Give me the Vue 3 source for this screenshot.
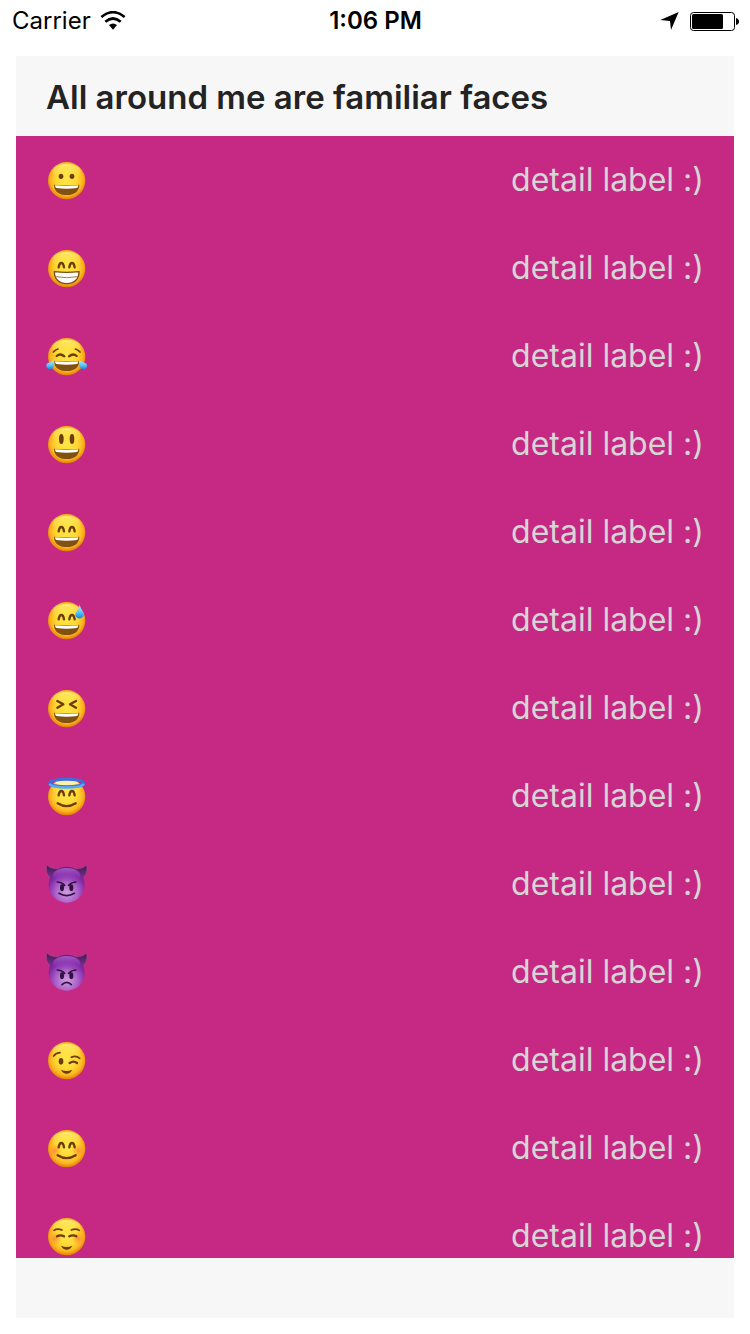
<script setup>
const faces = [
  { name: 'Grinning face', type: 'grin', eyes: 'dots', mouth: 'open' },
  { name: 'Beaming face', type: 'beam', eyes: 'arcs', mouth: 'teeth' },
  { name: 'Tears of joy', type: 'joy', eyes: 'joy', mouth: 'open' },
  { name: 'Big eyes', type: 'big', eyes: 'tall', mouth: 'open' },
  { name: 'Smiling eyes', type: 'smile', eyes: 'arcs', mouth: 'open' },
  { name: 'Sweat', type: 'sweat', eyes: 'arcs', mouth: 'open' },
  { name: 'Squinting', type: 'squint', eyes: 'squint', mouth: 'open' },
  { name: 'Halo', type: 'halo', eyes: 'arcs', mouth: 'smile' },
  { name: 'Smiling imp', type: 'imp', eyes: 'imp', mouth: 'smirk' },
  { name: 'Angry imp', type: 'angry', eyes: 'imp', mouth: 'frown' },
  { name: 'Winking', type: 'wink', eyes: 'wink', mouth: 'small' },
  { name: 'Blushing', type: 'blush', eyes: 'arcs', mouth: 'smile' },
  { name: 'Relaxed', type: 'relaxed', eyes: 'relaxed', mouth: 'small' },
]
const isImp = (f) => f.eyes === 'imp'
</script>

<template>
  <div class="screen">
    <svg class="defs" width="0" height="0" aria-hidden="true">
      <defs>
        <radialGradient id="yellow" cx="0.5" cy="0.46" r="0.56">
          <stop offset="0" stop-color="#ffe648" />
          <stop offset="0.5" stop-color="#ffd834" />
          <stop offset="0.78" stop-color="#fbb420" />
          <stop offset="1" stop-color="#dd7206" />
        </radialGradient>
        <linearGradient id="shine" x1="0" y1="0" x2="0" y2="1">
          <stop offset="0" stop-color="#fff27a" stop-opacity="0.85" />
          <stop offset="1" stop-color="#ffe040" stop-opacity="0" />
        </linearGradient>
        <radialGradient id="purple" cx="0.5" cy="0.72" r="0.7">
          <stop offset="0" stop-color="#cf9ce0" />
          <stop offset="0.45" stop-color="#aa60c8" />
          <stop offset="0.75" stop-color="#8429a8" />
          <stop offset="1" stop-color="#61257f" />
        </radialGradient>
        <linearGradient id="impShine" x1="0" y1="0" x2="0" y2="1">
          <stop offset="0" stop-color="#a35bc8" />
          <stop offset="1" stop-color="#8f2db4" stop-opacity="0" />
        </linearGradient>
        <linearGradient id="horn" x1="0" y1="0" x2="0" y2="1">
          <stop offset="0" stop-color="#3d1a52" />
          <stop offset="1" stop-color="#80308f" />
        </linearGradient>
        <linearGradient id="water" x1="0" y1="0" x2="0" y2="1">
          <stop offset="0" stop-color="#b8eafc" />
          <stop offset="0.55" stop-color="#5cc8f8" />
          <stop offset="1" stop-color="#1585dc" />
        </linearGradient>
        <radialGradient id="cheek">
          <stop offset="0" stop-color="#ff7838" stop-opacity="0.7" />
          <stop offset="1" stop-color="#ff8a30" stop-opacity="0" />
        </radialGradient>
      </defs>
    </svg>

    <header class="status">
      <div class="carrier">
        <span>Carrier</span>
        <svg width="26" height="20" viewBox="0 0 78 60" aria-hidden="true">
          <path d="M4 18Q39-11 74 18" fill="none" stroke="#000" stroke-width="8" />
          <path d="M16 32Q39 13 62 32" fill="none" stroke="#000" stroke-width="8" />
          <path d="M27 42Q39 33 51 42L39 56Z" />
        </svg>
      </div>
      <time class="time">1:06 PM</time>
      <div class="indicators">
        <svg width="20" height="20" viewBox="0 0 60 60" aria-hidden="true">
          <path d="M56 3L33 57L30 30L1 27Z" />
        </svg>
        <svg width="50" height="20" viewBox="0 0 50 20" aria-hidden="true">
          <rect x="1.5" y="1.5" width="44" height="18" rx="3" fill="none" stroke="#000" />
          <rect x="3" y="3" width="31" height="15" rx="1.5" />
          <path d="M47 7Q50 8 50 10.500Q50 13 47 14Z" />
        </svg>
      </div>
    </header>

    <main class="card">
      <h1 class="title">All around me are familiar faces</h1>
      <ul class="list">
        <li v-for="f in faces" :key="f.type" class="row">
          <svg class="face" viewBox="0 0 180 180" role="img" :aria-label="f.name">
            <template v-if="isImp(f)">
              <path d="M21 33C29 43 44 45 60 45L31 73C19 62 17 45 21 33Z" fill="url(#horn)" stroke="#a45391" stroke-width="1.500" />
              <path d="M139 33C131 43 116 45 100 45L129 73C141 62 143 45 139 33Z" fill="url(#horn)" stroke="#a45391" stroke-width="1.500" />
              <circle cx="80" cy="92" r="54" fill="url(#purple)" />
              <ellipse cx="80" cy="64" rx="41" ry="22" fill="url(#impShine)" />
            </template>
            <template v-else>
              <circle cx="80" cy="92" r="56" fill="url(#yellow)" />
              <ellipse cx="80" cy="66" rx="42" ry="25" fill="url(#shine)" />
            </template>

            <g v-if="f.type === 'blush' || f.type === 'relaxed'" fill="url(#cheek)">
              <circle cx="45" cy="98" r="20" />
              <circle cx="115" cy="98" r="20" />
            </g>

            <g v-if="f.eyes === 'dots'" fill="#6b3d0a">
              <ellipse cx="63" cy="79" rx="7" ry="8" />
              <ellipse cx="96" cy="79" rx="7" ry="8" />
            </g>
            <g v-else-if="f.eyes === 'tall'" fill="#6b3d0a">
              <ellipse cx="64" cy="75" rx="7" ry="15" />
              <ellipse cx="96" cy="75" rx="7" ry="15" />
            </g>
            <g v-else-if="f.eyes === 'arcs'" class="ink">
              <path d="M56 88Q58 75 64 75Q70 75 72 88" />
              <path d="M88 88Q90 75 96 75Q102 75 104 88" />
            </g>
            <g v-else-if="f.eyes === 'joy'" class="ink">
              <path d="M50 90Q61 80 73 91M87 91Q99 80 110 90" />
              <path d="M40 78Q46 71 54 69M106 69Q114 71 120 78" class="thin" />
            </g>
            <g v-else-if="f.eyes === 'squint'" class="ink">
              <path d="M52 69L70 79L52 89M108 69L90 79L108 89" />
            </g>
            <g v-else-if="f.eyes === 'wink'">
              <ellipse cx="63" cy="94" rx="7" ry="10" fill="#6b3d0a" />
              <g class="ink">
                <path d="M89 99Q101 91 111 99" />
                <path d="M41 78Q49 68 60 68M94 82Q108 75 119 85" class="thin" />
              </g>
            </g>
            <g v-else-if="f.eyes === 'relaxed'" class="ink">
              <path d="M51 91Q62 85 72 91M88 91Q99 85 109 91" />
              <path d="M42 73Q52 66 66 72M94 72Q107 66 118 73" class="thin" />
            </g>
            <g v-else>
              <ellipse cx="66" cy="101" rx="6" ry="10" fill="#30113f" />
              <ellipse cx="94" cy="101" rx="6" ry="10" fill="#30113f" />
              <path d="M52 84Q65 84 74 94M108 84Q95 84 86 94" class="impInk" />
            </g>

            <template v-if="f.mouth === 'open'">
              <path d="M42 104Q80 109 118 104C118 124 103 135 80 135C57 135 42 124 42 104Z" fill="#82500f" />
              <path d="M45 106Q80 110 115 106Q115 112 111 114Q80 119 49 114Q45 112 45 106Z" fill="#fff" />
            </template>
            <template v-else-if="f.mouth === 'teeth'">
              <path d="M43 101Q80 105 117 101C117 124 102 137 80 137C58 137 43 124 43 101Z" fill="#fff" stroke="#7a4b12" stroke-width="4" />
              <path d="M46 116Q80 122 114 116" fill="none" stroke="#9a7a4e" stroke-width="3" />
              <path d="M64 106V133M80 107V136M96 106V133" fill="none" stroke="#d9d0c2" stroke-width="1" />
            </template>
            <path v-else-if="f.mouth === 'smile'" d="M53 112Q80 129 107 112" class="ink" />
            <path v-else-if="f.mouth === 'small'" d="M63 119Q80 127 97 119Q91 131 80 131Q69 131 63 119Z" fill="#6b3d0a" />
            <path v-else-if="f.mouth === 'smirk'" d="M57 118Q80 132 103 118" class="impInk" />
            <path v-else d="M66 128Q80 114 94 128" class="impInk" />

            <template v-if="f.type === 'joy'">
              <path d="M43 102Q46 130 30 130Q19 129 19 118C20 109 34 109 43 102Z" fill="url(#water)" />
              <path d="M117 102Q114 130 130 130Q141 129 141 118C140 109 126 109 117 102Z" fill="url(#water)" />
            </template>
            <path v-if="f.type === 'sweat'" d="M119 43C122 60 133 66 131 75C128 89 108 88 106 76C105 65 118 61 119 43Z" fill="url(#water)" />
            <template v-if="f.type === 'halo'">
              <ellipse cx="80" cy="50" rx="34" ry="8" fill="#fff0b0" />
              <ellipse cx="80" cy="51" rx="51" ry="11" fill="none" stroke="#3770e2" stroke-width="8" />
              <path d="M28 54C38 68 122 68 132 54" fill="none" stroke="#55adfa" stroke-width="7" />
            </template>
          </svg>
          <span class="detail">detail label :)</span>
        </li>
      </ul>
      <footer class="foot"></footer>
    </main>
  </div>
</template>

<style>
body {
  margin: 0;
  background: #fff;
}
</style>

<style scoped>
.screen {
  display: flex;
  flex-direction: column;
  box-sizing: border-box;
  height: 100vh;
  padding: 0 16px 16px;
  overflow: hidden;
  font-family: Inter, Roboto, "Liberation Sans", sans-serif;
  color: #000;
}
.defs {
  position: absolute;
}
.status {
  display: grid;
  grid-template-columns: 1fr auto 1fr;
  align-items: center;
  flex: none;
  height: 42px;
  margin: 0 -16px 14px;
  padding: 0 11px 0 12px;
  font-size: 24px;
  line-height: 42px;
}
.carrier,
.indicators {
  display: flex;
  align-items: center;
  gap: 9px;
}
.indicators {
  justify-content: flex-end;
}
.time {
  font-weight: 600;
}
.card {
  display: flex;
  flex: 1;
  flex-direction: column;
  min-height: 0;
  background: #f7f7f7;
}
.title {
  flex: none;
  margin: 0;
  padding: 2px 30px 0;
  font-size: 33px;
  font-weight: 600;
  line-height: 78px;
  color: #232323;
}
.list {
  flex: 1;
  min-height: 0;
  margin: 0;
  padding: 0;
  overflow: hidden;
  list-style: none;
  background: #c52984;
}
.row {
  display: flex;
  align-items: center;
  justify-content: space-between;
  height: 88px;
  padding: 0 30px 0 24px;
}
.face {
  width: 60px;
  height: 60px;
}
.detail {
  font-size: 32px;
  line-height: 44px;
  color: #d6d6d6;
}
.foot {
  flex: none;
  height: 60px;
}
.ink {
  fill: none;
  stroke: #6b3d0a;
  stroke-width: 7;
  stroke-linecap: round;
  stroke-linejoin: round;
}
.thin {
  stroke-width: 5;
}
.impInk {
  fill: none;
  stroke: #30113f;
  stroke-width: 5;
  stroke-linecap: round;
}
</style>
